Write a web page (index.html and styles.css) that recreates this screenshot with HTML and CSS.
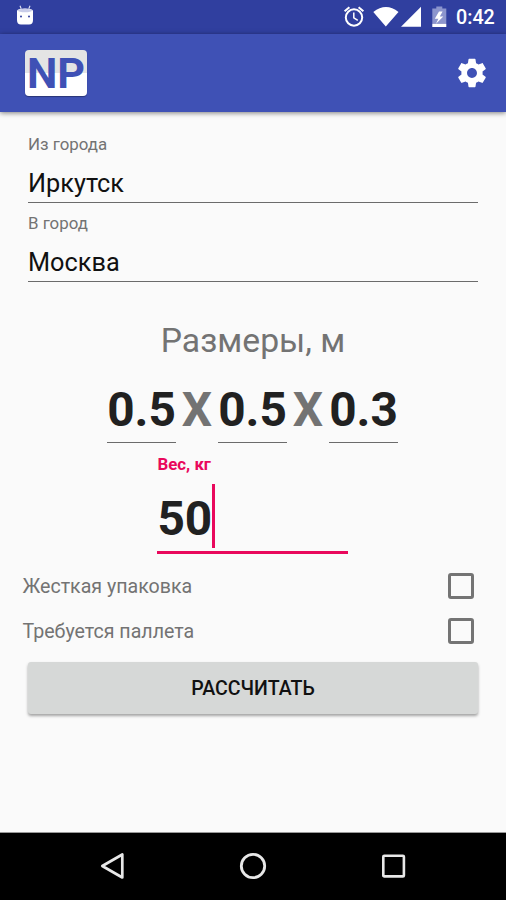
FILE: index.html
```html
<!DOCTYPE html>
<html lang="ru">
<head>
<meta charset="utf-8">
<title>NP</title>
<link rel="stylesheet" href="styles.css">
</head>
<body>
<div class="status">
  <svg class="droid" width="18" height="20" viewBox="0 0 18 20"><path d="M4 .8l1.200 3M14 .8l-1.200 3" stroke="#dfe2f3" stroke-width="1.100"/><path d="M1 6Q1 3.500 9 3.500t8 2.500v9q0 4.500-4 4.500H5q-4 0-4-4.500z" fill="#fff"/><ellipse cx="9" cy="5.500" rx="7" ry="1.700" fill="#c9cde9"/><circle cx="5" cy="11.500" r="1" fill="#303f9f"/><circle cx="13" cy="11.500" r="1" fill="#303f9f"/></svg>
  <svg class="sys" width="110" height="24" viewBox="0 0 110 24">
    <g fill="none" stroke="#fff"><circle cx="14" cy="14.500" r="8.200" stroke-width="2"/><path d="M13.800 9.500v5.300l4 2.600" stroke-width="1.500"/><path d="M4.600 8.200l4.800-4M23.400 8.200l-4.800-4" stroke-width="2"/></g>
    <path d="M33.300 9Q46-.9 58.500 9L45.800 23.500zM61 23.800L81 3.800v20z" fill="#fff"/>
    <path d="M92.300 5.500h4V3.500h6v2h4v14.500h-14z" fill="#8c95cd"/><path d="M92.300 20.500h14v3.500h-14zM99 8.500l-4.200 7.200h3.600l-2.400 5 7.300-7.200h-3.500L102.600 8.500z" fill="#fff"/>
  </svg>
  <span class="clock">0:42</span>
</div>
<header class="bar">
  <div class="logo"><span>NP</span></div>
  <svg class="gear" width="34" height="34" viewBox="0 0 24 24"><path fill="#fff" d="M19.430 12.980c.04-.32.070-.64.070-.98s-.03-.66-.07-.98l2.110-1.650c.19-.15.240-.42.120-.64l-2-3.460c-.12-.22-.39-.3-.61-.22l-2.490 1c-.52-.4-1.080-.73-1.690-.98l-.38-2.650C14.460 2.180 14.250 2 14 2h-4c-.25 0-.46.180-.49.420l-.38 2.650c-.61.250-1.170.590-1.690.980l-2.490-1c-.23-.09-.49 0-.61.220l-2 3.460c-.13.220-.07.490.120.640l2.110 1.650c-.04.320-.07.650-.07.980s.03.660.070.980l-2.110 1.650c-.19.150-.24.420-.12.640l2 3.460c.12.220.39.300.61.220l2.490-1c.52.400 1.080.730 1.690.980l.38 2.650c.03.240.240.420.490.420h4c.25 0 .46-.18.490-.42l.38-2.650c.61-.25 1.170-.59 1.690-.98l2.490 1c.23.090.490 0 .61-.22l2-3.460c.12-.22.070-.49-.12-.64l-2.110-1.650zM12 15.500c-1.930 0-3.500-1.570-3.500-3.500s1.570-3.500 3.500-3.500 3.500 1.570 3.500 3.500-1.570 3.500-3.500 3.500z"/></svg>
</header>
<main>
  <div class="field"><label>Из города</label><div class="value">Иркутск</div></div>
  <div class="field"><label>В город</label><div class="value">Москва</div></div>
  <h2>Размеры, м</h2>
  <div class="dims"><div class="num">0.5</div><span class="x">X</span><div class="num">0.5</div><span class="x">X</span><div class="num">0.3</div></div>
  <div class="weight"><label>Вес, кг</label><div class="entry"><span>50</span><i class="caret"></i></div></div>
  <div class="option"><span>Жесткая упаковка</span><i class="box"></i></div>
  <div class="option"><span>Требуется паллета</span><i class="box"></i></div>
  <div class="button">РАССЧИТАТЬ</div>
</main>
<nav>
  <svg width="26" height="30" viewBox="0 0 26 30"><path d="M2.300 15L22.300 3.500v23z" fill="none" stroke="#e8e8e8" stroke-width="2.700" stroke-linejoin="round"/></svg>
  <svg width="28" height="30" viewBox="0 0 28 30"><circle cx="14" cy="15" r="11.700" fill="none" stroke="#e8e8e8" stroke-width="2.800"/></svg>
  <svg width="26" height="30" viewBox="0 0 26 30"><rect x="3.300" y="4.800" width="20.600" height="20.600" rx="1" fill="none" stroke="#e8e8e8" stroke-width="2.600"/></svg>
</nav>
</body>
</html>
```
FILE: styles.css
```css
* { box-sizing: border-box; }
body {
  margin: 0;
  width: 506px;
  height: 900px;
  overflow: hidden;
  display: flex;
  flex-direction: column;
  background: #fafafa;
  font-family: Roboto, sans-serif;
  color: #212121;
}
svg { display: block; flex: none; }
.status {
  height: 34px;
  flex: none;
  display: flex;
  align-items: flex-start;
  background: #303f9f;
  color: #fff;
}
.droid { margin: 5px 0 0 16px; }
.sys { margin: 3px 0 0 306px; }
.clock {
  margin-left: 6px;
  font-size: 19.700px;
  font-weight: 500;
  line-height: 36px;
}
.bar {
  height: 78px;
  flex: none;
  display: flex;
  justify-content: space-between;
  padding: 16px 17px 0 25px;
  background: #3f51b5;
  box-shadow: 0 1px 5px rgba(0, 0, 0, .5);
}
.logo {
  width: 62px;
  height: 46px;
  border-radius: 4px;
  background: linear-gradient(#e4e4e4 50%, #fff 50%);
  box-shadow: 0 1px 1px rgba(0, 0, 0, .35);
  color: #3f51b5;
  font-size: 43px;
  font-weight: 700;
  line-height: 46px;
  text-align: center;
}
.gear { margin-top: 6px; }
main { flex: 1; padding: 22px 28px 0; }
.field { height: 79px; }
label {
  display: block;
  color: #737373;
  font-size: 16.870px;
  line-height: 20px;
}
.value {
  height: 49px;
  padding-top: 15px;
  border-bottom: 1px solid #6b6b6b;
  color: #111;
  font-size: 25.300px;
  line-height: 30px;
}
h2 {
  margin: 29px 0 0;
  color: #737373;
  font-size: 33.700px;
  font-weight: 400;
  line-height: 40px;
  text-align: center;
}
.dims {
  display: flex;
  justify-content: center;
  margin: 21px 1px 0 0;
  font-size: 47.800px;
  font-weight: 700;
  line-height: 56px;
}
.num {
  width: 69px;
  height: 61px;
  border-bottom: 1px solid #6b6b6b;
  text-align: center;
}
.x { width: 42px; text-align: center; color: #737373; }
.weight { width: 191px; margin: 11px 0 0 129.400px; }
.weight label { color: #e9085c; font-weight: 700; }
.entry {
  display: flex;
  height: 79px;
  margin-top: 1px;
  padding-top: 9px;
  border-bottom: 3px solid #e9085c;
  font-size: 47.800px;
  font-weight: 700;
  line-height: 70px;
}
.caret { width: 3px; height: 64px; background: #e9085c; }
.option {
  display: flex;
  justify-content: space-between;
  height: 45px;
  margin: 0 4px 0 -5.500px;
  color: #737373;
  font-size: 19.600px;
  line-height: 45px;
}
.weight + .option { margin-top: 10px; }
.box {
  width: 26px;
  height: 26px;
  margin-top: 9px;
  border: 3px solid #747474;
  border-radius: 3px;
}
.button {
  height: 52px;
  margin-top: 8px;
  border-radius: 3px;
  background: #d6d8d7;
  box-shadow: 0 2px 3px rgba(0, 0, 0, .35);
  color: #111;
  font-size: 19.600px;
  font-weight: 500;
  line-height: 53px;
  text-align: center;
}
nav {
  height: 68px;
  flex: none;
  display: flex;
  justify-content: space-between;
  padding: 18px 100px 0;
  border-top: 1px solid #999;
  background: #000;
}
```
